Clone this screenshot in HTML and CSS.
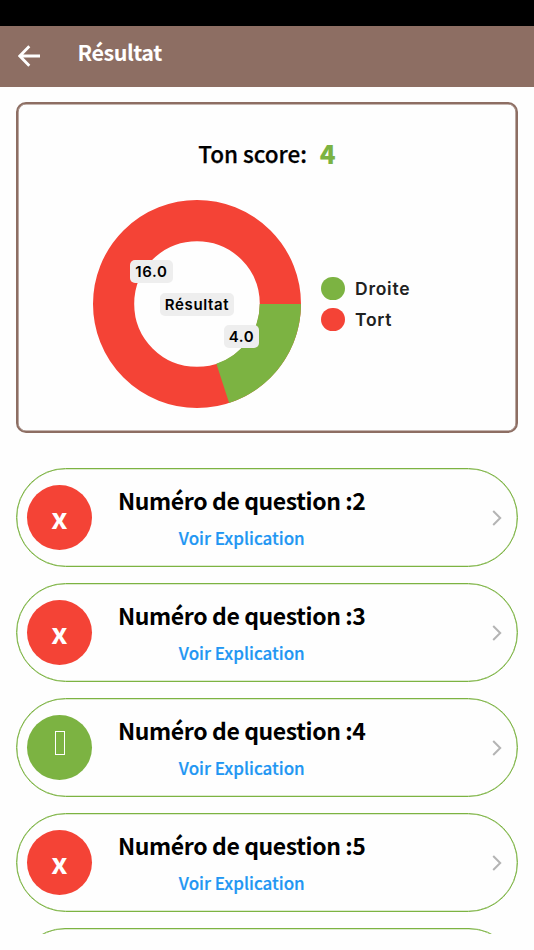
FILE: index.html
```html
<!DOCTYPE html>
<html lang="fr">
<head>
<meta charset="utf-8">
<title>Résultat</title>
<link rel="stylesheet" href="styles.css">
</head>
<body>
<div class="screen">
  <div class="status-bar"></div>
  <header class="app-bar">
    <svg class="back" viewBox="0 0 22 22"><path d="M22 11H2.500M11.300 1.200L1.800 11l9.500 9.800"/></svg>
    <h1 class="app-title">Résultat</h1>
  </header>
  <section class="score-card">
    <p class="score"><span class="score-label">Ton score:</span><span class="score-value">4</span></p>
    <div class="chart-row">
      <div class="donut">
        <svg class="ring" viewBox="0 0 208 208">
          <circle cx="104" cy="104" r="83.400" fill="none" stroke="#f44336" stroke-width="41.200"/>
          <path d="M208 104A104 104 0 0 1 136.140 202.910L123.380 163.630A62.700 62.700 0 0 0 166.700 104Z" fill="#7cb342"/>
        </svg>
        <span class="tag tag-wrong">16.0</span>
        <span class="tag tag-center">Résultat</span>
        <span class="tag tag-right">4.0</span>
      </div>
      <ul class="legend">
        <li><i class="dot green"></i>Droite</li>
        <li><i class="dot red"></i>Tort</li>
      </ul>
    </div>
  </section>
  <main class="questions">
    <article class="question">
      <div class="badge red"><span class="cross">x</span></div>
      <div class="body"><h2>Numéro de question :2</h2><a>Voir Explication</a></div>
      <svg class="chevron" viewBox="0 0 10 16"><path d="M1.200 1l7 7-7 7"/></svg>
    </article>
    <article class="question">
      <div class="badge red"><span class="cross">x</span></div>
      <div class="body"><h2>Numéro de question :3</h2><a>Voir Explication</a></div>
      <svg class="chevron" viewBox="0 0 10 16"><path d="M1.200 1l7 7-7 7"/></svg>
    </article>
    <article class="question">
      <div class="badge green"><span class="box"></span></div>
      <div class="body"><h2>Numéro de question :4</h2><a>Voir Explication</a></div>
      <svg class="chevron" viewBox="0 0 10 16"><path d="M1.200 1l7 7-7 7"/></svg>
    </article>
    <article class="question">
      <div class="badge red"><span class="cross">x</span></div>
      <div class="body"><h2>Numéro de question :5</h2><a>Voir Explication</a></div>
      <svg class="chevron" viewBox="0 0 10 16"><path d="M1.200 1l7 7-7 7"/></svg>
    </article>
    <article class="question"></article>
  </main>
</div>
</body>
</html>
```
FILE: styles.css
```css
* { box-sizing: border-box; }
body {
  margin: 0;
  background: #fefefe;
  color: #000;
  font-family: "Noto Sans CJK JP", "Noto Sans", sans-serif;
}
h1, h2, p, ul { margin: 0; padding: 0; }
.screen {
  display: flex;
  flex-direction: column;
  height: 934px;
  overflow: hidden;
}
.status-bar { flex: none; height: 26px; background: #000; }
.app-bar {
  flex: none;
  display: flex;
  align-items: center;
  height: 60.500px;
  padding-left: 18px;
  background: #8d6e63;
}
.back {
  width: 22px;
  height: 22px;
  fill: none;
  stroke: #fff;
  stroke-width: 2.800;
}
.app-title {
  margin: -8px 0 0 37.500px;
  color: #fff;
  font-size: 21.500px;
  font-weight: 700;
  letter-spacing: -.45px;
  line-height: 30px;
}
.score-card {
  flex: none;
  height: 331px;
  margin: 15.500px 16px 0;
  padding-top: 33px;
  border: 2px solid #8d6e63;
  border-radius: 10px;
  box-shadow: inset 0 0 0 .6px #8d6e63;
}
.score {
  display: flex;
  justify-content: center;
  gap: 13px;
  line-height: 32px;
}
.score-label {
  font-size: 22.500px;
  font-weight: 500;
  letter-spacing: -.05px;
  -webkit-text-stroke: .25px #000;
}
.score-value { color: #7cb342; font-size: 26px; font-weight: 900; }
.chart-row {
  display: flex;
  align-items: center;
  gap: 20px;
  margin: 31px 0 0 75px;
}
.donut { position: relative; width: 208px; height: 208px; }
.ring { display: block; width: 208px; height: 208px; }
.tag {
  position: absolute;
  height: 23px;
  border-radius: 5px;
  background: #eee;
  font: 600 15px/23px Inter, sans-serif;
  letter-spacing: .65px;
  text-align: center;
}
.tag-wrong { left: 37px; top: 60px; width: 43px; }
.tag-center { left: 67px; top: 92.500px; width: 74px; }
.tag-right { left: 131px; top: 125px; width: 35px; }
.legend { list-style: none; }
.legend li {
  display: flex;
  align-items: center;
  gap: 10.500px;
  height: 31px;
  color: #212121;
  font: 600 17.500px/31px Inter, sans-serif;
  letter-spacing: .75px;
}
.dot { width: 23.500px; height: 23.500px; border-radius: 50%; }
.red { background: #f44336; }
.green { background: #7cb342; }
.questions {
  display: flex;
  flex-direction: column;
  gap: 16px;
  margin: 35px 16px 0;
}
.question {
  flex: none;
  display: flex;
  align-items: center;
  height: 98.900px;
  padding: 0 15px 0 10px;
  border: 1px solid #7cb342;
  border-radius: 50px;
  box-shadow: inset 0 0 0 .3px #7cb342;
}
.badge {
  display: flex;
  align-items: center;
  justify-content: center;
  width: 65px;
  height: 65px;
  border-radius: 50%;
}
.cross { margin-top: -2px; color: #fff; font-size: 29px; font-weight: 700; line-height: 30px; }
.box { width: 10px; height: 24px; margin-top: -9px; border: 1px solid #fff; }
.body {
  display: flex;
  flex-direction: column;
  align-items: center;
  margin-left: 26px;
}
.body h2 { font-size: 23px; font-weight: 700; letter-spacing: -.4px; line-height: 34px; }
.body a {
  margin-top: 8px;
  color: #2196f3;
  font-size: 17px;
  font-weight: 500;
  line-height: 26px;
  -webkit-text-stroke: .2px #2196f3;
}
.chevron {
  width: 10px;
  height: 16px;
  margin: 1px 0 0 auto;
  fill: none;
  stroke: #b4b4b4;
  stroke-width: 2;
}
```
